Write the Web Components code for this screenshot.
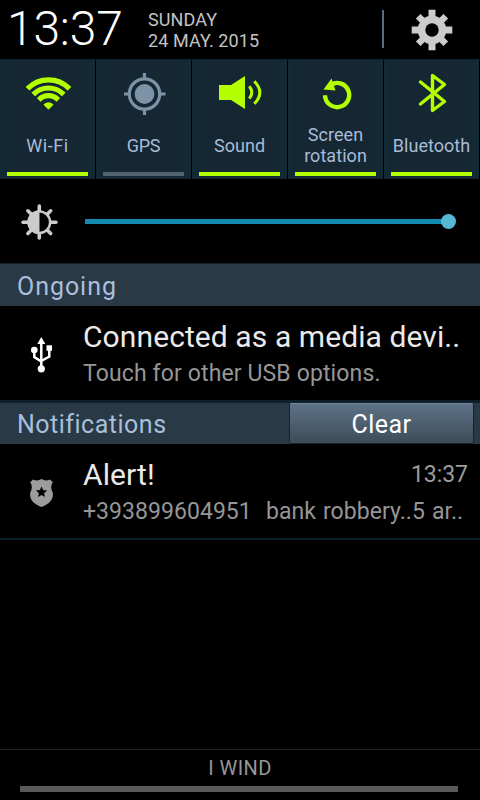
<!DOCTYPE html>
<html lang="en">
<head>
<meta charset="utf-8">
<title>Notification panel</title>
<style>
body{margin:0;background:#000}
</style>
</head>
<body>
<notification-panel></notification-panel>
<script>
const define = (name, css, html) => customElements.define(name, class extends HTMLElement {
  constructor() {
    super();
    this.attachShadow({mode: 'open'}).innerHTML = `<style>*{box-sizing:border-box}${css}</style>${html}`;
  }
});

define('status-header', `
:host{display:flex;height:59px;color:#fff;background:#000}
.clock{width:148px;padding-left:7px;font-weight:300;font-size:48px;line-height:57px;letter-spacing:-.2px;white-space:nowrap}
.date{flex:1;padding-top:9px;font-size:18px;line-height:21px;color:#c3c3c3;white-space:nowrap;letter-spacing:.08px}
.rule{width:2px;height:38px;margin-top:10px;background:#5a6b7b}
svg{width:96px;height:59px}`, `
<div class="clock">13:37</div>
<div class="date"><div>SUNDAY</div><div>24 MAY. 2015</div></div>
<div class="rule"></div>
<svg viewBox="384 0 96 59"><g fill="#ccc"><rect x="428.500" y="9.700" width="7" height="40.600"/><rect x="411.700" y="26.500" width="40.600" height="7"/><g transform="rotate(45 432 30)"><rect x="428.700" y="10.500" width="6.600" height="39"/><rect x="412.500" y="26.700" width="39" height="6.600"/></g><circle cx="432" cy="30" r="14.300"/></g><circle cx="432" cy="30" r="6.700" fill="#000"/></svg>`);

define('quick-tile', `
:host{display:flex;flex-direction:column;flex:1;height:119px;border-right:1px solid #000;background:linear-gradient(90deg,#132a37 0,#142732 8px,#142732 88px,#132a37);color:#a9bbd6;align-items:center}
.icon{height:63px;width:95px}
.label{height:44px;width:95px;display:flex;align-items:center;justify-content:center;text-align:center;font-size:18px;line-height:21px;white-space:pre;letter-spacing:var(--ls,.25px)}
.bar{width:81px;height:4px;margin-top:5px;background:#b3ff00}
:host([off]) .bar{background:#51636f}`, `
<div class="icon"><slot name="icon"></slot></div><div class="label"><slot></slot></div><div class="bar"></div>`);

define('quick-settings', `
:host{display:flex;height:120px;border-top:1px solid #0b2030}
svg{display:block;width:95px;height:63px}`, `
<quick-tile style="--ls:.6px"><svg slot="icon" viewBox="0 60 95 63"><defs><clipPath id="w"><path d="M48.500 109.800 20 81.300V70h57v11.300z"/></clipPath></defs><g clip-path="url(#w)" fill="none" stroke="#b3ff00" stroke-width="5.200"><circle cx="48.500" cy="109" r="29.200"/><circle cx="48.500" cy="109" r="21"/><circle cx="48.500" cy="109" r="13.300"/><circle cx="48.500" cy="108.500" r="3" stroke-width="6.500"/></g></svg>Wi-Fi</quick-tile>
<quick-tile off style="--ls:-.2px"><svg slot="icon" viewBox="96 60 95 63"><g fill="none" stroke="#7c92a7" stroke-width="3.200"><circle cx="144.500" cy="94" r="15.200"/><path d="M144.500 73v6M144.500 109v6M124 94h6M159 94h6.500"/></g><circle cx="144.500" cy="94" r="9.900" fill="#7c92a7"/></svg>GPS</quick-tile>
<quick-tile style="--ls:.05px"><svg slot="icon" viewBox="192 60 95 63"><path d="M219 85h12l14-9v33l-14-9h-12z" fill="#b3ff00"/><g fill="none" stroke="#b3ff00" stroke-width="3"><path d="M249.300 86.200q5 6.200 0 12.400M254.300 81.200q11 11.300 0 22.600"/></g></svg>Sound</quick-tile>
<quick-tile style="--ls:.05px"><svg slot="icon" viewBox="288 60 95 63"><path d="M325 95.200a12.100 12.100 0 1 0 6-10.600l5-1.600" fill="none" stroke="#b3ff00" stroke-width="4.400"/><path d="m323.500 89.600 8-11.100 1 3 3 9z" fill="#b3ff00"/></svg>Screen
rotation</quick-tile>
<quick-tile style="--ls:.02px"><svg slot="icon" viewBox="384 60 95 63"><path d="m420.500 82 24 19.500-12 9V75.500l12 9-24 19.500" fill="none" stroke="#b3ff00" stroke-width="3.400" stroke-linejoin="round" stroke-linecap="round"/></svg>Bluetooth</quick-tile>`);

define('brightness-slider', `
:host{display:flex;height:84px;align-items:center;background:#000}
svg{width:85px;height:84px}
.track{width:364px;height:5px;margin-top:1px;background:#118bb0;display:flex;align-items:center;justify-content:flex-end}
.thumb{width:15px;height:15px;flex:none;margin-right:-7px;border-radius:50%;background:#55b9d4}`, `
<svg viewBox="0 179 85 84"><g stroke="#ccc" stroke-width="3.600" stroke-linecap="round"><path d="M39.300 206v5M39.300 233v5M23 222.200h5M51 222.200h5M27.900 210.800l3.500 3.500M47.200 230.100l3.500 3.500M27.900 233.600l3.500-3.500M47.200 214.300l3.500-3.500"/><circle cx="39.300" cy="222.200" r="10.800" fill="#000" stroke-width="2.400"/></g><path d="M39.500 210.400a11.800 11.800 0 0 0 0 23.600z" fill="#ccc"/></svg>
<div class="track"><div class="thumb"></div></div>`);

define('section-bar', `
:host{box-sizing:border-box;display:flex;height:var(--h,43px);background:#2a3946;border-top:1px solid #15222c;color:#a9bfdb;font-size:25px;line-height:42px;letter-spacing:var(--ls,.5px)}
.label{flex:1;padding:var(--pt,2px) 0 0 17px}`, `<div class="label"><slot></slot></div><slot name="action"></slot>`);

define('clear-button', `
:host{box-sizing:border-box;display:block;width:185px;height:42px;margin:-1px 6px 0 0;border:1px solid #17232c;border-radius:2px;background:linear-gradient(#5f7388,#3c4c58);box-shadow:inset 0 1px #71859a;color:#fff;font-size:25px;line-height:43px;text-align:center;letter-spacing:.45px}`, `<slot></slot>`);

define('notification-row', `
:host{box-sizing:border-box;display:grid;grid-template-columns:83px 1fr auto;grid-template-rows:58px 36px;height:96px;background:#000;border-bottom:2px solid #0b1e29;white-space:pre}
.icon{grid-row:1/3;height:94px}
.title{font-size:30px;line-height:61px;color:#eaeaea;letter-spacing:var(--tls,0)}
.time{font-size:23px;line-height:62px;color:#9c9c9c;padding-right:12px;letter-spacing:-.05px}
.text{grid-column:2/4;font-size:23px;line-height:20px;color:#969696;letter-spacing:var(--ls,0);word-spacing:var(--ws,0)}`, `
<div class="icon"><slot name="icon"></slot></div><div class="title"><slot name="title"></slot></div><div class="time"><slot name="time"></slot></div><div class="text"><slot></slot></div>`);

define('carrier-footer', `
:host{box-sizing:border-box;display:flex;flex-direction:column;height:51px;border-top:1px solid #20272b;color:#969696;font-size:20px;line-height:36px;text-align:center;letter-spacing:.4px}
.handle{width:438px;height:6px;margin-left:20px;background:#595959}`, `<div><slot></slot></div><div class="handle"></div>`);

define('notification-panel', `
:host{display:flex;flex-direction:column;width:480px;height:800px;background:#000;overflow:hidden;font-family:Roboto,sans-serif}
:host>*{flex:none}
svg{display:block;width:83px;height:94px}
.space{flex:1}`, `
<status-header></status-header>
<quick-settings></quick-settings>
<brightness-slider></brightness-slider>
<section-bar style="--ls:.95px">Ongoing</section-bar>
<notification-row style="--tls:.09px;--ls:.13px"><svg slot="icon" viewBox="0 306 83 94"><g fill="#fff"><path d="m41.300 337 4 7h-8z"/><circle cx="41.300" cy="368.800" r="3.600"/><circle cx="34.300" cy="350" r="3.300"/><path d="M46.500 345.300h5.500v5.500h-5.500z"/></g><path d="M41.300 342v25M34.300 350v7l7 4.500M49.300 350v6.500l-8 4.500" fill="none" stroke="#fff" stroke-width="2.500"/></svg><span slot="title">Connected as a media devi..</span>Touch for other USB options.</notification-row>
<section-bar style="--h:42px;--pt:1px">Notifications<clear-button slot="action">Clear</clear-button></section-bar>
<notification-row style="--ls:.05px;--ws:1.3px;--tls:.1px"><svg slot="icon" viewBox="0 444 83 94"><path d="M33 479.500q4.500 2 8.500-.5 4 2.500 8.500.5l2.800 2.700q-3.300 4 0 10.500 1.300 9.500-11.300 14.300-12.800-4.800-11.300-14.300 3.300-6.500 0-10.500z" fill="#9c9c9c"/><path d="m41.500 486.500 1.600 3.600 4 .4-3 2.700.9 3.900-3.500-2-3.500 2 .9-3.900-3-2.700 4-.4z" fill="#000"/></svg><span slot="title">Alert!</span><span slot="time">13:37</span>+393899604951  bank robbery..5 ar..</notification-row>
<div class="space"></div>
<carrier-footer>I WIND</carrier-footer>`);
</script>
</body>
</html>
